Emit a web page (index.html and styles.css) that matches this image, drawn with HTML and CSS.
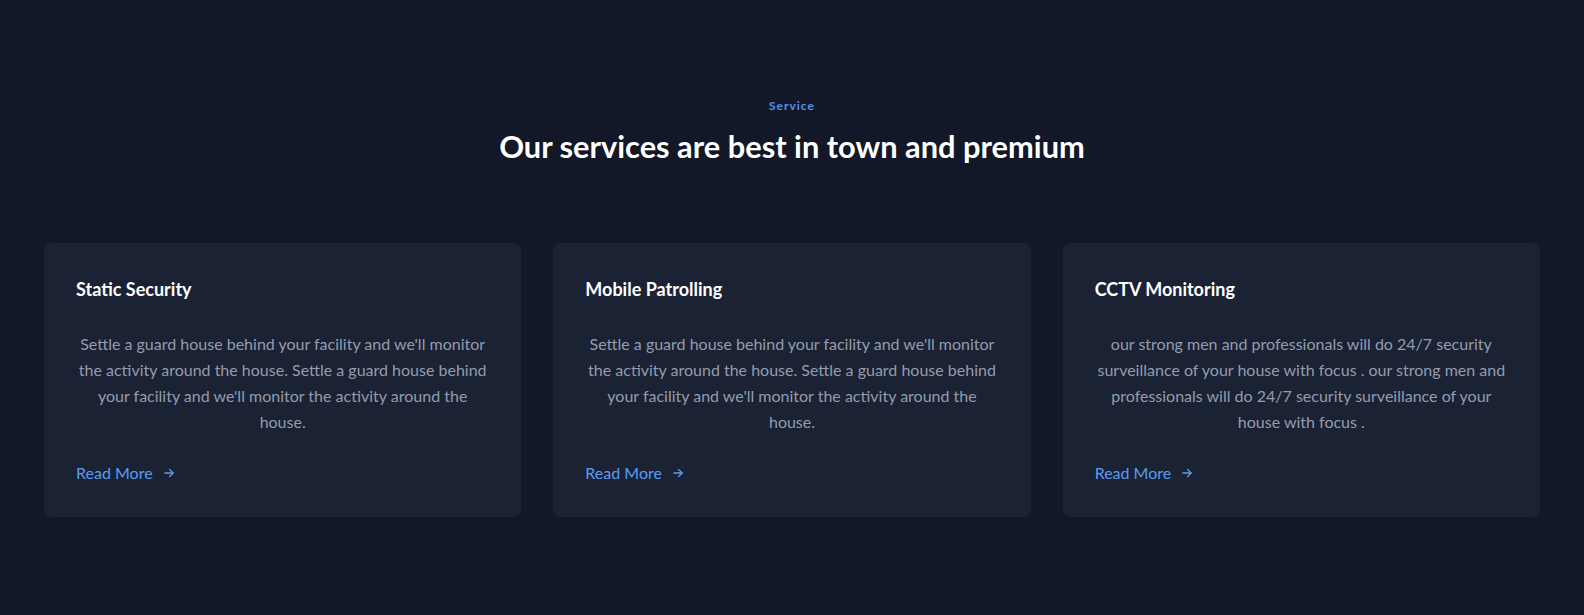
FILE: index.html
```html
<!DOCTYPE html>
<html lang="en">
<head>
<meta charset="utf-8">
<title>Services</title>
<link rel="stylesheet" href="styles.css">
</head>
<body>
<section class="services">
  <div class="intro">
    <p class="eyebrow">Service</p>
    <h2 class="heading">Our services are best in town and premium</h2>
  </div>
  <div class="grid">
    <article class="card">
      <h3 class="card-title">Static Security</h3>
      <p class="card-text">Settle a guard house behind your facility and we'll monitor the activity around the house. Settle a guard house behind your facility and we'll monitor the activity around the house.</p>
      <a class="more" href="#">Read More
        <svg class="arrow" viewBox="0 0 24 24" fill="none" stroke="currentColor" stroke-width="2.2" stroke-linecap="round" stroke-linejoin="round"><path d="M5 12h14"/><path d="M13 6l6 6-6 6"/></svg>
      </a>
    </article>
    <article class="card">
      <h3 class="card-title">Mobile Patrolling</h3>
      <p class="card-text">Settle a guard house behind your facility and we'll monitor the activity around the house. Settle a guard house behind your facility and we'll monitor the activity around the house.</p>
      <a class="more" href="#">Read More
        <svg class="arrow" viewBox="0 0 24 24" fill="none" stroke="currentColor" stroke-width="2.2" stroke-linecap="round" stroke-linejoin="round"><path d="M5 12h14"/><path d="M13 6l6 6-6 6"/></svg>
      </a>
    </article>
    <article class="card">
      <h3 class="card-title">CCTV Monitoring</h3>
      <p class="card-text">our strong men and professionals will do 24/7 security surveillance of your house with focus . our strong men and professionals will do 24/7 security surveillance of your house with focus .</p>
      <a class="more" href="#">Read More
        <svg class="arrow" viewBox="0 0 24 24" fill="none" stroke="currentColor" stroke-width="2.2" stroke-linecap="round" stroke-linejoin="round"><path d="M5 12h14"/><path d="M13 6l6 6-6 6"/></svg>
      </a>
    </article>
  </div>
</section>
</body>
</html>
```
FILE: styles.css
```css
* { box-sizing: border-box; }
html, body {
  margin: 0;
  padding: 0;
  background: #121827;
}
body {
  font-family: Lato, "Noto Sans", sans-serif;
  color: #ffffff;
  min-height: 615px;
}
.services {
  padding: 97px 44px 98px;
}
.intro {
  text-align: center;
}
.eyebrow {
  margin: 0;
  font-size: 12px;
  line-height: 18px;
  font-weight: 700;
  letter-spacing: 1px;
  color: #5595ee;
}
.heading {
  margin: 12px 0 0;
  font-size: 30.8px;
  line-height: 40px;
  font-weight: 700;
  color: #ffffff;
}
.grid {
  margin-top: 76px;
  display: grid;
  grid-template-columns: repeat(3, 1fr);
  gap: 32px;
}
.card {
  background: #1a2233;
  border-radius: 8px;
  padding: 32px;
  display: flex;
  flex-direction: column;
  align-items: flex-start;
}
.card-title {
  margin: 0;
  font-size: 18px;
  line-height: 28px;
  font-weight: 700;
  color: #ffffff;
}
.card-text {
  margin: 28px 0 0;
  width: 100%;
  text-align: center;
  font-size: 16px;
  line-height: 26px;
  color: #949cae;
}
.more {
  margin-top: 26px;
  display: inline-flex;
  align-items: center;
  gap: 9px;
  font-size: 16px;
  line-height: 24px;
  color: #5b9cf2;
  text-decoration: none;
}
.arrow {
  width: 14px;
  height: 14px;
}
```
